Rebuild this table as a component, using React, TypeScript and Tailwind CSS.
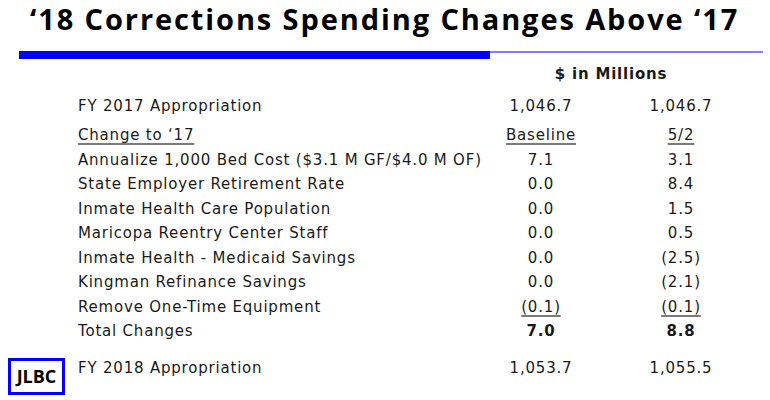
const body = "font-['DejaVu_Sans',Verdana,sans-serif] text-[15px] tracking-[0.8px] text-[#1a1a1a]";

type RowProps = {
  label: string;
  a: string;
  b: string;
  bold?: boolean;
  underlineLabel?: boolean;
  underlineValues?: boolean;
  className?: string;
};

function Row({ label, a, b, bold, underlineLabel, underlineValues, className }: RowProps) {
  const u = "underline decoration-[#7a7a7a] decoration-[1.5px] underline-offset-[3px]";
  return (
    <div className={`grid grid-cols-[393px_140px_140px] h-[24.5px] items-end ${className ?? ""}`}>
      <span className={`whitespace-nowrap ${underlineLabel ? u : ""}`}>{label}</span>
      <span className={`text-center ${bold ? "font-bold" : ""} ${underlineValues ? u : ""}`}>{a}</span>
      <span className={`text-center ${bold ? "font-bold" : ""} ${underlineValues ? u : ""}`}>{b}</span>
    </div>
  );
}

const changes = [
  { label: "Annualize 1,000 Bed Cost ($3.1 M GF/$4.0 M OF)", a: "7.1", b: "3.1" },
  { label: "State Employer Retirement Rate", a: "0.0", b: "8.4" },
  { label: "Inmate Health Care Population", a: "0.0", b: "1.5" },
  { label: "Maricopa Reentry Center Staff", a: "0.0", b: "0.5" },
  { label: "Inmate Health - Medicaid Savings", a: "0.0", b: "(2.5)" },
  { label: "Kingman Refinance Savings", a: "0.0", b: "(2.1)" },
];

export default function App() {
  return (
    <div className="w-[770px] h-[400px] bg-white overflow-hidden relative">
      <h1 className="pl-[30px] font-['Open_Sans',sans-serif] font-bold text-[29px] tracking-[1.9px] leading-[38px] text-black whitespace-nowrap">
        ‘18 Corrections Spending Changes Above ‘17
      </h1>

      {/* header rule */}
      <div className="flex items-start pl-[19px] pr-[7px] mt-[13px]">
        <div className="w-[471px] h-[8px] bg-[#0000ff]" />
        <div className="flex-1 h-[2px] bg-[#8282f2]" />
      </div>

      <div className={body}>
        <div className="pl-[471px] w-[751px] mt-[5px] text-center font-bold leading-[20px]">$ in Millions</div>

        <div className="pl-[78px] mt-[9px]">
          <Row label="FY 2017 Appropriation" a="1,046.7" b="1,046.7" />
          <Row
            label="Change to ‘17"
            a="Baseline"
            b="5/2"
            underlineLabel
            underlineValues
            className="mt-[4.5px]"
          />
          {changes.map((c) => (
            <Row key={c.label} label={c.label} a={c.a} b={c.b} />
          ))}
          <Row label="Remove One-Time Equipment" a="(0.1)" b="(0.1)" underlineValues />
          <Row label="Total Changes" a="7.0" b="8.8" bold />
        </div>

        <div className="flex items-start mt-[12px]">
          <div className="ml-[8px] w-[57px] h-[37px] mt-[3px] border-[3px] border-[#0000ff] flex items-center justify-center font-['Open_Sans',sans-serif] font-bold text-[18px] tracking-[0px] text-black">
            JLBC
          </div>
          <div className="ml-[13px]">
            <Row label="FY 2018 Appropriation" a="1,053.7" b="1,055.5" />
          </div>
        </div>
      </div>
    </div>
  );
}
